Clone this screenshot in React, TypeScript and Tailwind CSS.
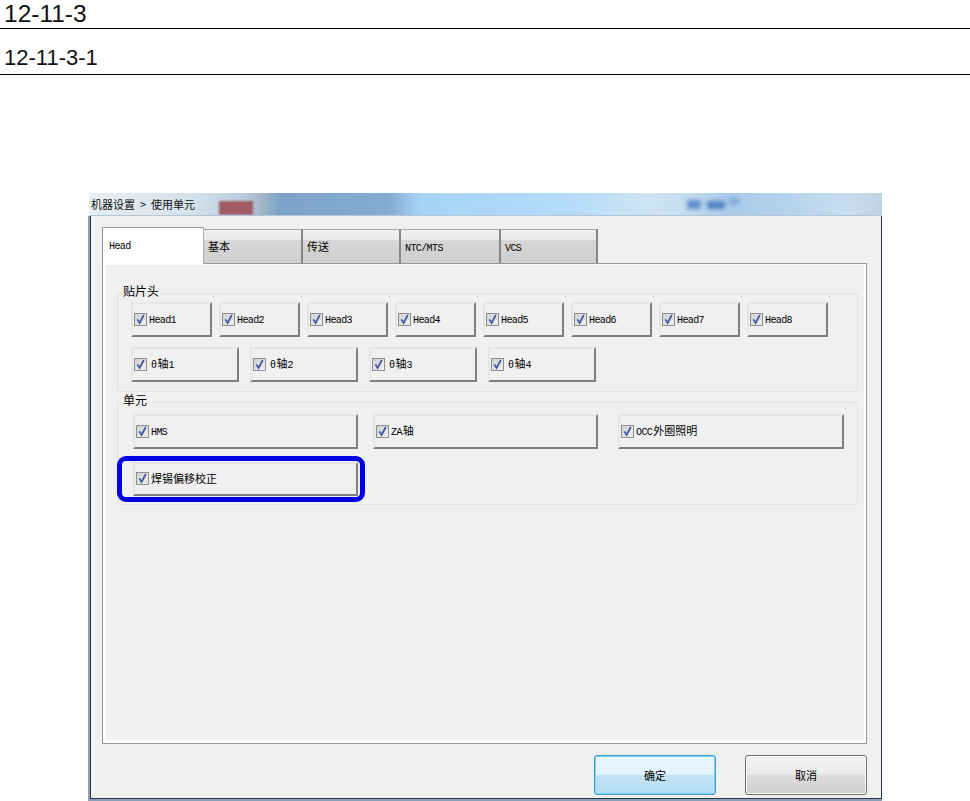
import React from 'react';

const cjk = 'font-["Liberation_Mono","Noto_Sans_CJK_SC",monospace]';

// 라틴 문자는 좁게, 한자는 11px로 표시
function MixedText({ text }: { text: string }) {
  const parts = text.split(/([\u4e00-\u9fff]+)/).filter(Boolean);
  return (
    <span className="whitespace-nowrap">
      {parts.map((p, i) =>
        /[\u4e00-\u9fff]/.test(p) ? (
          <span key={i} className={i > 0 ? 'ml-[1px] text-[11px]' : 'text-[11px]'}>{p}</span>
        ) : (
          <span key={i} className="text-[10px] tracking-[-0.6px]">{p}</span>
        )
      )}
    </span>
  );
}

function Check() {
  return (
    <span className="flex h-[13px] w-[13px] shrink-0 items-center justify-center border border-[#8e8f8f] bg-[linear-gradient(135deg,#cfcfd3,#f2f2f4)]">
      <svg width="11" height="11" viewBox="0 0 11 11" fill="none">
        <path d="M2.4 5.4 L4.6 9 L8.8 1" stroke="#43589f" strokeWidth="1.8" />
      </svg>
    </span>
  );
}

function UnitButton({ label, w, h, gap = 'gap-[2px]', pad = 'pl-[1px]' }: { label: string; w: string; h: string; gap?: string; pad?: string }) {
  return (
    <div className={`flex ${w} ${h} shrink-0 items-center ${gap} ${pad} border-t-2 border-l-2 border-t-[#e6e6e6] border-l-[#e6e6e6] border-r-2 border-b-2 border-r-[#808080] border-b-[#808080] bg-[#f0f0f0] pb-[1px] text-black`}>
      <Check />
      <MixedText text={label} />
    </div>
  );
}

function Tab({ label, w, active }: { label: string; w: string; active?: boolean }) {
  if (active) {
    return (
      <div className={`${w} relative z-10 h-[37px] border-t border-l border-r border-[#8f9399] border-r-[#b0b0b0] bg-white pt-[11px] pl-[6px] text-[10px] tracking-[-0.6px]`}>
        {label}
      </div>
    );
  }
  return (
    <div className={`${w} flex h-[35px] items-center border-t border-[#a8a8a8] border-r-2 border-r-[#85858a] bg-[linear-gradient(#f0f0f0_0%,#e8e8e8_30%,#d6d6d6_31%,#cfcfcf_100%)] pl-[4px] text-black`}>
      <MixedText text={label} />
    </div>
  );
}

function Group({ title, className, children }: { title: string; className: string; children: React.ReactNode }) {
  return (
    <div className={`relative rounded-[3px] border border-[#dbe3ea] ${className}`}>
      <span className="absolute top-[-8px] left-[5px] bg-[#f0f0f0] pr-[1px] text-[12px] leading-[14px] text-black">{title}</span>
      {children}
    </div>
  );
}

export default function App() {
  const heads = ['Head1', 'Head2', 'Head3', 'Head4', 'Head5', 'Head6', 'Head7', 'Head8'];
  const axes = ['θ轴1', 'θ轴2', 'θ轴3', 'θ轴4'];
  const tabs = [
    { label: '基本', w: 'w-[99px]' },
    { label: '传送', w: 'w-[98px]' },
    { label: 'NTC/MTS', w: 'w-[100px]' },
    { label: 'VCS', w: 'w-[97px]' },
  ];

  return (
    <div className={`h-[801px] w-[970px] overflow-hidden bg-white ${cjk}`}>
      {/* 상단 제목 */}
      <div className='h-[29px] border-b border-black pl-[4px] font-["Liberation_Sans",sans-serif] text-[24.5px] leading-[28px] text-[#111]'>12-11-3</div>
      <div className='h-[46px] border-b border-black pt-[14px] pl-[4px] font-["Liberation_Sans",sans-serif] text-[22px] leading-[30px] text-[#111]'>12-11-3-1</div>

      {/* 창 */}
      <div className="mt-[118px] ml-[88px] flex h-[608px] w-[794px] flex-col">
        <div className="relative ml-[1px] h-[23px] shrink-0 overflow-hidden border-b border-[#b4c6d6] bg-[linear-gradient(90deg,#e8eff3_0px,#d5e2ec_100px,#bccfdf_150px,#a9b9c9_170px,#7da4c8_190px,#84abd0_300px,#a6d3f5_330px,#b4dcfa_480px,#cfe4f2_560px,#c4dcef_600px,#a9cbe9_640px,#b5d3ec_700px,#c9def0_760px,#bfd2e0_793px)] pt-[3px] pl-[2px] font-['Noto_Sans_CJK_SC',sans-serif] text-[11px] leading-[16px] text-[#111]">
          <div className="absolute bottom-0 left-[130px] h-[14px] w-[34px] bg-[#a25c66] blur-[1px]" />
          <div className="absolute top-[7px] left-[598px] h-[9px] w-[14px] bg-[#5f8fc4] blur-[2px]" />
          <div className="absolute top-[8px] left-[618px] h-[8px] w-[18px] bg-[#4f83c2] blur-[2px]" />
          <div className="absolute top-[5px] left-[640px] h-[7px] w-[10px] bg-[#7fa9d6] blur-[2px]" />
          <span className="relative [word-spacing:2.5px]">机器设置 &gt; 使用单元</span>
        </div>

        <div className="flex min-h-0 flex-1 flex-col border-l-2 border-b-2 border-[#8ba0b8]">
          <div className="flex min-h-0 flex-1 flex-col border-l border-b border-r border-[#2b3a4a] bg-[#f0f0f0] pt-[11px] pl-[11px]">
            {/* 탭 */}
            <div className="flex h-[37px] shrink-0 items-end">
              <Tab label="Head" w="w-[102px]" active />
              <div className="flex h-[35px] items-start">
                {tabs.map((t) => (
                  <Tab key={t.label} label={t.label} w={t.w} />
                ))}
              </div>
            </div>

            {/* 패널 */}
            <div className="mt-[-1px] h-[481px] w-[765px] border border-[#97979c] bg-[#f0f0f0] shadow-[inset_3px_0_0_#fff,inset_-2px_0_0_#fff,inset_0_-3px_0_#fff,inset_0_1px_0_#fff]">
              <Group title="贴片头" className="mt-[29px] ml-[14px] h-[99px] w-[741px]">
                <div className="grid grid-cols-[repeat(8,81px)] gap-x-[7px] pt-[8px] pl-[13px]">
                  {heads.map((h) => (
                    <UnitButton key={h} label={h} w="w-[81px]" h="h-[35px]" />
                  ))}
                </div>
                <div className="flex gap-x-[11px] pt-[10px] pl-[13px]">
                  {axes.map((a) => (
                    <UnitButton key={a} label={a} w="w-[108px]" h="h-[35px]" gap="gap-[4px]" />
                  ))}
                </div>
              </Group>

              <Group title="单元" className="mt-[10px] ml-[14px] h-[103px] w-[741px]">
                <div className="flex pt-[11px] pl-[15px]">
                  <UnitButton label="HMS" w="w-[225px]" h="h-[35px]" />
                  <div className="ml-[15px]">
                    <UnitButton label="ZA轴" w="w-[225px]" h="h-[35px]" />
                  </div>
                  <div className="ml-[20px]">
                    <UnitButton label="OCC外圈照明" w="w-[226px]" h="h-[35px]" />
                  </div>
                </div>
                <div className="relative mt-[13px] ml-[15px] w-[225px]">
                  <UnitButton label="焊锡偏移校正" w="w-[225px]" h="h-[34px]" />
                  <div className="absolute top-[-6px] right-[-7px] bottom-[-6px] left-[-16px] rounded-[9px] border-[5px] border-[#0000e6]" />
                </div>
              </Group>
            </div>

            {/* 하단 버튼 */}
            <div className="mt-[11px] ml-[492px] flex gap-x-[29px] font-['Noto_Sans_CJK_SC',sans-serif] text-[11px] text-black">
              <div className="flex h-[40px] w-[122px] items-center justify-center rounded-[3px] border border-[#3c9ad0] bg-[linear-gradient(#e8f6fd_0%,#e2f3fc_48%,#c4e4f7_50%,#b4dcf3_100%)] shadow-[inset_0_0_0_1px_#7fd4f8]">确定</div>
              <div className="flex h-[40px] w-[122px] items-center justify-center rounded-[3px] border border-[#707070] bg-[linear-gradient(#f2f2f2_0%,#ebebeb_48%,#dcdcdc_50%,#cfcfcf_100%)] shadow-[inset_0_0_0_1px_#fafafa]">取消</div>
            </div>
          </div>
        </div>
      </div>
    </div>
  );
}
